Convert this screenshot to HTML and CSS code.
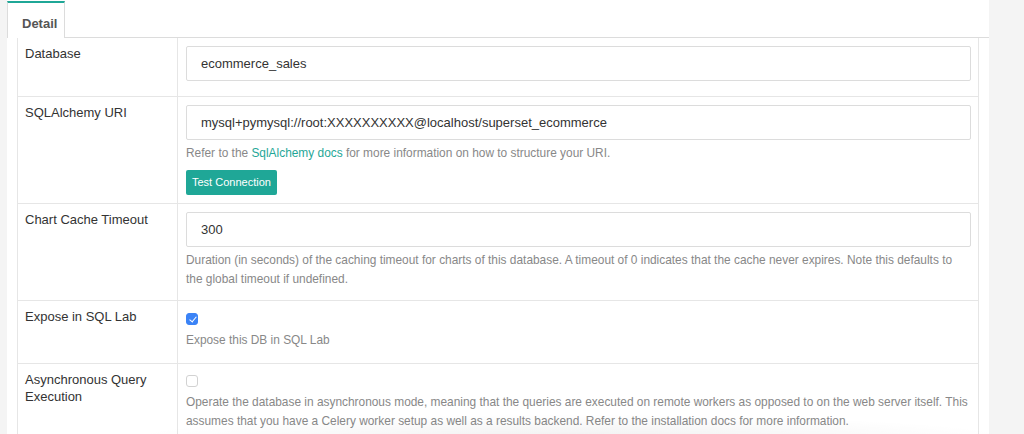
FILE: index.html
```html
<!DOCTYPE html>
<html>
  <head>
    <meta charset="UTF-8">
    <title>Edit Database</title>
    <link rel="stylesheet" href="styles.css">
  </head>
  <body>
    <div class="panel">
      <ul class="tabs">
        <li class="tab active">Detail</li>
      </ul>

      <table class="fields">
        <tr class="row-database">
          <th>Database</th>
          <td>
            <input class="form-control" type="text" name="database_name" value="ecommerce_sales">
          </td>
        </tr>
        <tr class="row-uri">
          <th>SQLAlchemy URI</th>
          <td>
            <input class="form-control" type="text" name="sqlalchemy_uri" value="mysql+pymysql://root:XXXXXXXXXX@localhost/superset_ecommerce">
            <p class="help">Refer to the <a href="#">SqlAlchemy docs</a> for more information on how to structure your URI.</p>
            <a href="#test-connection" class="button">Test Connection</a>
          </td>
        </tr>
        <tr class="row-timeout">
          <th>Chart Cache Timeout</th>
          <td>
            <input class="form-control" type="text" name="cache_timeout" value="300">
            <p class="help">Duration (in seconds) of the caching timeout for charts of this database. A timeout of 0 indicates that the cache never expires. Note this defaults to the global timeout if undefined.</p>
          </td>
        </tr>
        <tr class="row-check">
          <th>Expose in SQL Lab</th>
          <td>
            <span class="checkbox checked"></span>
            <p class="help">Expose this DB in SQL Lab</p>
          </td>
        </tr>
        <tr class="row-check row-last">
          <th>Asynchronous Query Execution</th>
          <td>
            <span class="checkbox"></span>
            <p class="help">Operate the database in asynchronous mode, meaning that the queries are executed on remote workers as opposed to on the web server itself. This assumes that you have a Celery worker setup as well as a results backend. Refer to the installation docs for more information.</p>
          </td>
        </tr>
      </table>
    </div>
    <div class="fade"></div>
  </body>
</html>
```

FILE: styles.css
```css
html, body {
  height: 100%;
}

body {
  background: #f4f4f4;
  margin: 0;
  padding-left: 7px;
  font-family: "Liberation Sans", Arial, sans-serif;
  font-size: 13px;
  color: #333;
  overflow: hidden;
}

.panel {
  background: white;
  width: 982px;
  height: 100%;
}

.tabs {
  display: flex;
  list-style: none;
  margin: 0;
  padding: 1px 0 0 0;
  height: 36px;
  border-bottom: 1px solid #dcdcdc;
  box-sizing: content-box;
}

.tab {
  width: 58px;
  border-top: 2px solid #1fa797;
  border-left: 1px solid #dcdcdc;
  border-right: 1px solid #dcdcdc;
  background: white;
  margin-bottom: -1px;
  font-weight: bold;
  color: #555;
  padding: 13px 0 0 14px;
  box-sizing: border-box;
}

.fields {
  margin-left: 10px;
  width: 962px;
  border-collapse: collapse;
  table-layout: fixed;
}

.fields th,
.fields td {
  border: 1px solid #e6e6e6;
  border-top: none;
  padding: 8px;
  vertical-align: top;
  text-align: left;
}

.fields td {
  padding-right: 7px;
}

.fields th {
  width: 144px;
  padding-left: 7px;
  font-weight: normal;
  line-height: 17px;
  color: #333;
}

.fields th::before {
  content: "";
  display: block;
  margin-top: -1px;
}

.form-control {
  display: block;
  width: 100%;
  height: 35px;
  box-sizing: border-box;
  border: 1px solid #dcdcdc;
  border-radius: 2px;
  padding: 0 14px;
  font-family: inherit;
  font-size: 13px;
  color: #333;
  outline: none;
  margin: 0;
}

.row-database .form-control {
  margin-bottom: 7px;
}

.help {
  margin: 4px 0 0 0;
  font-size: 11.9px;
  line-height: 19px;
  color: #888;
}

.help a {
  color: #1fa797;
  text-decoration: none;
}

.row-timeout .help {
  margin-bottom: 3px;
}

.button {
  display: inline-block;
  margin-top: 7px;
  height: 25px;
  line-height: 25px;
  padding: 0 6px;
  background: #1fa797;
  color: white;
  font-size: 11px;
  border-radius: 2px;
  text-decoration: none;
}

.checkbox {
  display: block;
  width: 12px;
  height: 12px;
  margin-top: 4px;
  border: 1px solid #d2d2d2;
  border-radius: 3px;
  background: white;
  box-sizing: border-box;
  position: relative;
}

.row-last .checkbox {
  margin-top: 3px;
}

.checkbox.checked {
  background: #3b83f6;
  border-color: #3b83f6;
}

.checkbox.checked::after {
  content: "";
  position: absolute;
  left: 3.5px;
  top: 1px;
  width: 3px;
  height: 6px;
  border: solid white;
  border-width: 0 1.5px 1.5px 0;
  transform: rotate(40deg);
}

.row-check .help {
  margin-top: 6px;
  margin-bottom: 5px;
}

.fade {
  position: absolute;
  left: 120px;
  right: 0;
  bottom: -30px;
  height: 50px;
  background: radial-gradient(ellipse at center, rgba(0, 0, 0, 0.06), rgba(0, 0, 0, 0) 70%);
  pointer-events: none;
}
```
